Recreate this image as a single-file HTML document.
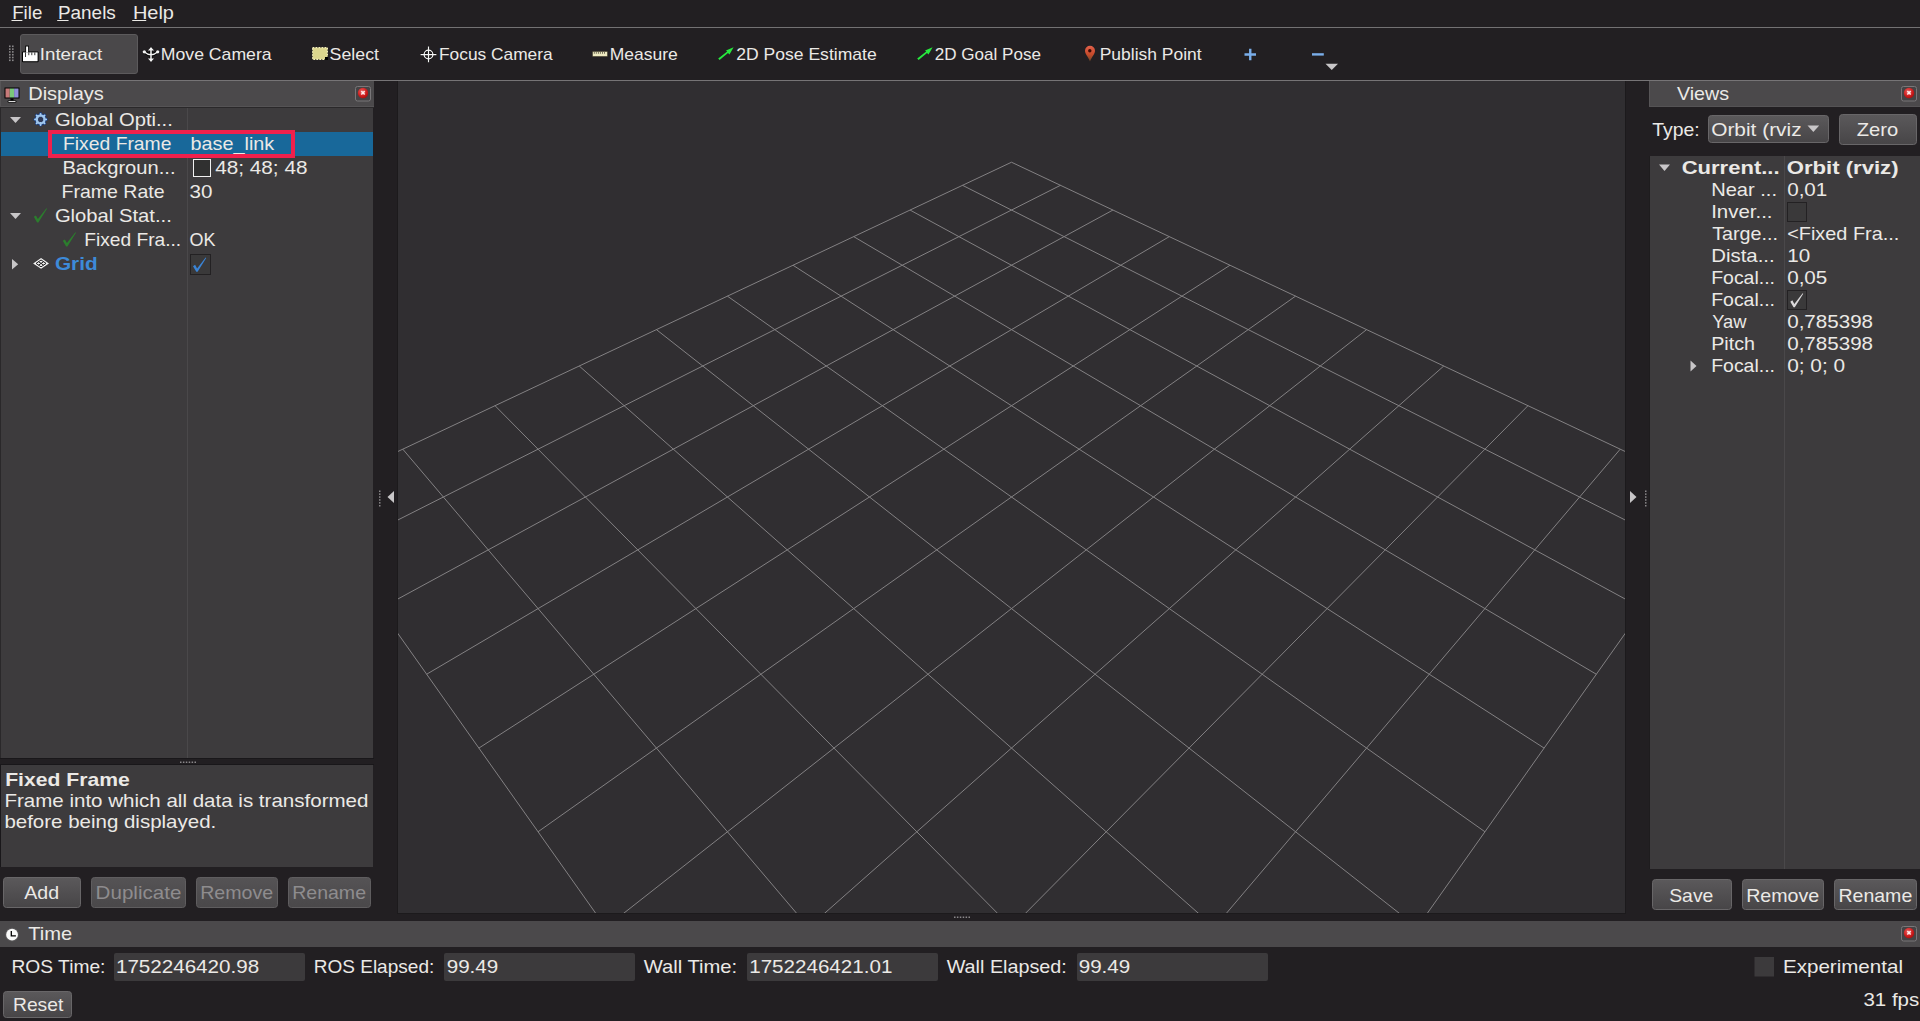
<!DOCTYPE html>
<html><head><meta charset="utf-8"><style>html,body{margin:0;padding:0;background:#221f22;overflow:hidden}svg{display:block}text{font-family:"Liberation Sans",sans-serif}</style></head>
<body><svg width="1920" height="1021" viewBox="0 0 1920 1021">
<defs><radialGradient id="redg" cx="0.4" cy="0.35" r="0.7"><stop offset="0" stop-color="#e86060"/><stop offset="0.6" stop-color="#d02020"/><stop offset="1" stop-color="#a80c0c"/></radialGradient></defs>
<rect x="0" y="0" width="1920" height="1021" fill="#221f22" />
<text x="12.20" y="19.00" font-size="19.0" fill="#ebe9e6" textLength="30.12" lengthAdjust="spacingAndGlyphs">File</text>
<text x="57.90" y="19.00" font-size="19.0" fill="#ebe9e6" textLength="57.94" lengthAdjust="spacingAndGlyphs">Panels</text>
<text x="132.90" y="19.00" font-size="19.0" fill="#ebe9e6" textLength="41.03" lengthAdjust="spacingAndGlyphs">Help</text>
<rect x="11.5" y="20" width="10.859375" height="1" fill="#ebe9e6" />
<rect x="57.2" y="20" width="11.359375" height="1" fill="#ebe9e6" />
<rect x="132.2" y="20" width="14.03125" height="1" fill="#ebe9e6" />
<rect x="0" y="27" width="1920" height="1" fill="#737173" />
<rect x="0" y="80" width="1920" height="1" fill="#767476" />
<rect x="9" y="45.5" width="1.6" height="1.6" fill="#8a888a" />
<rect x="12" y="45.5" width="1.6" height="1.6" fill="#8a888a" />
<rect x="9" y="48.3" width="1.6" height="1.6" fill="#8a888a" />
<rect x="12" y="48.3" width="1.6" height="1.6" fill="#8a888a" />
<rect x="9" y="51.1" width="1.6" height="1.6" fill="#8a888a" />
<rect x="12" y="51.1" width="1.6" height="1.6" fill="#8a888a" />
<rect x="9" y="53.9" width="1.6" height="1.6" fill="#8a888a" />
<rect x="12" y="53.9" width="1.6" height="1.6" fill="#8a888a" />
<rect x="9" y="56.7" width="1.6" height="1.6" fill="#8a888a" />
<rect x="12" y="56.7" width="1.6" height="1.6" fill="#8a888a" />
<rect x="9" y="59.5" width="1.6" height="1.6" fill="#8a888a" />
<rect x="12" y="59.5" width="1.6" height="1.6" fill="#8a888a" />
<rect x="20.5" y="34.5" width="117" height="39" rx="2.5" fill="#4a484a" stroke="#5c5a5c"/>
<text x="39.80" y="60.00" font-size="17" fill="#ebe9e6" textLength="62.45" lengthAdjust="spacingAndGlyphs">Interact</text>
<text x="160.80" y="60.00" font-size="17" fill="#ebe9e6" textLength="110.83" lengthAdjust="spacingAndGlyphs">Move Camera</text>
<text x="329.60" y="60.00" font-size="17" fill="#ebe9e6" textLength="49.38" lengthAdjust="spacingAndGlyphs">Select</text>
<text x="439.00" y="60.00" font-size="17" fill="#ebe9e6" textLength="113.62" lengthAdjust="spacingAndGlyphs">Focus Camera</text>
<text x="609.80" y="60.00" font-size="17" fill="#ebe9e6" textLength="68.03" lengthAdjust="spacingAndGlyphs">Measure</text>
<text x="736.20" y="60.00" font-size="17" fill="#ebe9e6" textLength="140.50" lengthAdjust="spacingAndGlyphs">2D Pose Estimate</text>
<text x="934.70" y="60.00" font-size="17" fill="#ebe9e6" textLength="106.25" lengthAdjust="spacingAndGlyphs">2D Goal Pose</text>
<text x="1099.70" y="60.00" font-size="17" fill="#ebe9e6" textLength="101.92" lengthAdjust="spacingAndGlyphs">Publish Point</text>

<!-- hand -->
<g>
 <rect x="25.3" y="45.6" width="3.6" height="10" fill="#000"/>
 <rect x="22" y="51.4" width="16.6" height="10.8" rx="1" fill="#000"/>
 <rect x="26.1" y="46.5" width="2" height="6" fill="#fff"/>
 <rect x="23" y="52.4" width="14.6" height="8.8" fill="#fff"/>
 <path d="M25.5 52.4 V57 M28.8 52.4 V55.2 M31.8 52.4 V55.2 M34.8 52.4 V55.2" stroke="#222" stroke-width="0.9"/>
</g>
<!-- move camera -->
<g fill="none" stroke="#000" stroke-width="3.2" stroke-linecap="round" opacity="0.9">
 <path d="M151 48.5 V60 M144.5 52 Q151 57.5 157.5 52"/>
</g>
<g fill="none" stroke="#f4f4f4" stroke-width="1.5">
 <path d="M151 48.5 V60 M144.5 52 Q151 57.5 157.5 52"/>
</g>
<g fill="#f4f4f4">
 <path d="M148 50.5 L151 47 L154 50.5 z M148 58.5 L151 62 L154 58.5 z"/>
 <circle cx="144.3" cy="51.8" r="1.6"/><circle cx="157.7" cy="51.8" r="1.6"/>
</g>
<!-- select -->
<rect x="312" y="47" width="16" height="13" fill="#201c1f"/>
<rect x="312.6" y="47.6" width="14.8" height="11.8" fill="#dcd68e" stroke="#f2eebc" stroke-width="1.2" stroke-dasharray="1.6 1.4"/>
<rect x="325" y="57" width="3" height="3" fill="#000"/>
<!-- focus -->
<g stroke="#000" fill="none" stroke-width="2.6" opacity="0.55"><circle cx="428.5" cy="54.5" r="4.4"/><path d="M428.5 46.5 V62.3 M420.6 54.5 H436.4"/></g>
<g stroke="#f6f6f6" fill="none" stroke-width="1.25"><circle cx="428.5" cy="54.5" r="4.4"/><path d="M428.5 46.5 V62.3 M420.6 54.5 H436.4"/></g>
<!-- measure ruler -->
<rect x="592" y="51" width="16" height="6" fill="#3a3428"/>
<rect x="592.8" y="51.8" width="14.4" height="4.4" fill="#ece8c0"/>
<path d="M594.3 51.8 v2 M596.3 51.8 v2 M598.4 51.8 v2 M600.4 51.8 v2 M602.5 51.8 v2 M604.5 51.8 v2" stroke="#6a6450" stroke-width="0.9"/>
<!-- pose arrows -->
<g fill="#27e83e">
 <path d="M718.2 58.6 L719.6 60 L728 53 L729.5 54.6 L733.6 47.3 L726 50.6 L727.2 51.6 z"/>
 <path d="M917.2 58.6 L918.6 60 L927 53 L928.5 54.6 L932.6 47.3 L925 50.6 L926.2 51.6 z"/>
</g>
<!-- pin -->
<defs><linearGradient id="ping" x1="0" y1="0" x2="0" y2="1"><stop offset="0" stop-color="#e2604a"/><stop offset="0.55" stop-color="#c64a2a"/><stop offset="1" stop-color="#6a4a2a"/></linearGradient></defs>
<path d="M1090 61.5 C1088.5 57 1085 54.5 1085 50.8 A5 5 0 0 1 1095 50.8 C1095 54.5 1091.5 57 1090 61.5 z" fill="url(#ping)"/>
<circle cx="1089.8" cy="50.8" r="1.7" fill="#3a0a06"/>
<!-- plus / minus -->
<path d="M1244.5 54.5 H1256 M1250.25 48.8 V60.2" stroke="#7aaeea" stroke-width="2.4"/>
<path d="M1312 54.4 H1323.8" stroke="#7aaeea" stroke-width="2.4"/>
<path d="M1325.5 63.8 L1338 63.8 L1331.75 70 z" fill="#c8c6c8"/>

<rect x="0" y="81" width="374" height="26" fill="#4b494b" />
<rect x="355.5" y="86.5" width="15" height="14.5" rx="2" fill="#454345" stroke="#797779" stroke-width="1"/>
<circle cx="363.0" cy="93.0" r="5.2" fill="url(#redg)"/>
<path d="M361.3 91.1 l3.4 3.4 M364.7 91.1 l-3.4 3.4" stroke="#ffe8e8" stroke-width="1.6"/>
<g transform="translate(4,87)">
<rect x="0.5" y="0.5" width="15" height="11" fill="#000"/>
<rect x="1.5" y="1.5" width="4.3" height="9" fill="#c77a7a"/><rect x="5.8" y="1.5" width="4.3" height="9" fill="#7ac77a"/><rect x="10.1" y="1.5" width="4.4" height="9" fill="#8f8fd8"/>
<rect x="6.5" y="11.5" width="3" height="2" fill="#000"/><rect x="3.5" y="13.5" width="9" height="2" rx="1" fill="#000"/><rect x="4.5" y="14" width="7" height="1" fill="#ddd"/>
</g>
<rect x="0" y="81" width="1" height="26" fill="#575557" />
<rect x="0" y="106" width="374" height="1" fill="#555355" />
<text x="28.20" y="100.00" font-size="19.0" fill="#ebe9e6" textLength="75.72" lengthAdjust="spacingAndGlyphs">Displays</text>
<rect x="0" y="107" width="374" height="1" fill="#2a282a" />
<rect x="1" y="108" width="372" height="650" fill="#3d3b3d" />
<rect x="0" y="108" width="1" height="650" fill="#2a282a" />
<rect x="187" y="108" width="1" height="650" fill="#4a484a" />
<rect x="1" y="132" width="372" height="24" fill="#18689a" />
<path d="M10 117 L21 117 L15.5 123 z" fill="#c8c6c8"/>
<path d="M10 213 L21 213 L15.5 219 z" fill="#c8c6c8"/>
<path d="M12 259 L18.2 264.3 L12 269.6 z" fill="#c8c6c8"/>
<g transform="translate(40.6,119.4)">
<g stroke="#1f3f7a" stroke-width="3.4" stroke-linecap="round"><path d="M0 -5.6 V5.6 M-5.6 0 H5.6 M-4 -4 L4 4 M-4 4 L4 -4"/></g>
<circle r="4.2" fill="none" stroke="#1f3f7a" stroke-width="3.6"/>
<g stroke="#a6cdf4" stroke-width="1.8" stroke-linecap="round"><path d="M0 -5.6 V5.6 M-5.6 0 H5.6 M-4 -4 L4 4 M-4 4 L4 -4"/></g>
<circle r="3.9" fill="none" stroke="#9ec6ee" stroke-width="2.2"/>
<circle r="2.6" fill="#2e3a58"/>
</g>
<path transform="translate(33.80,208.20) scale(1.000)" d="M0 8.6 L2.1 7.2 L4.1 10.9 L12.6 0 L13.2 0.5 L4.6 14.2 L3.3 14.2 z" fill="#2b7d2d"/>
<path transform="translate(62.80,232.20) scale(1.000)" d="M0 8.6 L2.1 7.2 L4.1 10.9 L12.6 0 L13.2 0.5 L4.6 14.2 L3.3 14.2 z" fill="#2b7d2d"/>
<g transform="translate(41.05,263.4)">
<path d="M-7.9 0 L0 -5.4 L7.9 0 L0 5.4 z" fill="#f4f4f4"/>
<path d="M-5.0 0 L0 -3.4 L5.0 0 L0 3.4 z M-2.5 -1.7 L2.5 1.7 M2.5 -1.7 L-2.5 1.7" fill="none" stroke="#1a181a" stroke-width="1.0"/>
</g>
<text x="54.90" y="126.00" font-size="19.0" fill="#ebe9e6" textLength="117.95" lengthAdjust="spacingAndGlyphs">Global Opti...</text>
<text x="63.00" y="150.00" font-size="19.0" fill="#ebe9e6" textLength="108.47" lengthAdjust="spacingAndGlyphs">Fixed Frame</text>
<text x="190.50" y="150.00" font-size="19.0" fill="#ebe9e6" textLength="83.73" lengthAdjust="spacingAndGlyphs">base_link</text>
<text x="62.40" y="174.00" font-size="19.0" fill="#ebe9e6" textLength="113.11" lengthAdjust="spacingAndGlyphs">Backgroun...</text>
<rect x="193.5" y="159.5" width="17" height="17" fill="#303030" stroke="#f0f0f0"/>
<text x="215.20" y="174.00" font-size="19.0" fill="#ebe9e6" textLength="92.28" lengthAdjust="spacingAndGlyphs">48; 48; 48</text>
<text x="61.50" y="198.00" font-size="19.0" fill="#ebe9e6" textLength="103.09" lengthAdjust="spacingAndGlyphs">Frame Rate</text>
<text x="189.60" y="198.00" font-size="19.0" fill="#ebe9e6" textLength="22.91" lengthAdjust="spacingAndGlyphs">30</text>
<text x="54.90" y="222.00" font-size="19.0" fill="#ebe9e6" textLength="116.88" lengthAdjust="spacingAndGlyphs">Global Stat...</text>
<text x="84.20" y="246.00" font-size="19.0" fill="#ebe9e6" textLength="97.02" lengthAdjust="spacingAndGlyphs">Fixed Fra...</text>
<text x="189.60" y="246.00" font-size="19.0" fill="#ebe9e6" textLength="25.97" lengthAdjust="spacingAndGlyphs">OK</text>
<text x="54.90" y="270.00" font-size="19.0" font-weight="bold" fill="#3d8ad8" textLength="42.72" lengthAdjust="spacingAndGlyphs">Grid</text>
<rect x="190.5" y="254.5" width="20" height="20" fill="#3a393a" stroke="#232123"/>
<path transform="translate(193.00,257.60) scale(1.000)" d="M0 8.6 L2.1 7.2 L4.1 10.9 L12.6 0 L13.2 0.5 L4.6 14.2 L3.3 14.2 z" fill="#3a84d6"/>
<rect x="50" y="132" width="243" height="24" fill="none" stroke="#f0204c" stroke-width="4"/>
<rect x="180.0" y="761.5" width="1.5" height="1.5" fill="#8a888a" />
<rect x="182.9" y="761.5" width="1.5" height="1.5" fill="#8a888a" />
<rect x="185.8" y="761.5" width="1.5" height="1.5" fill="#8a888a" />
<rect x="188.7" y="761.5" width="1.5" height="1.5" fill="#8a888a" />
<rect x="191.6" y="761.5" width="1.5" height="1.5" fill="#8a888a" />
<rect x="194.5" y="761.5" width="1.5" height="1.5" fill="#8a888a" />
<rect x="1" y="765" width="372" height="102" fill="#3d3b3d" />
<rect x="0" y="764" width="374" height="1" fill="#19171a" />
<rect x="0" y="758" width="374" height="1" fill="#19171a" />
<rect x="0" y="765" width="1" height="102" fill="#19171a" />
<text x="5.20" y="785.60" font-size="19.0" font-weight="bold" fill="#ebe9e6" textLength="124.55" lengthAdjust="spacingAndGlyphs">Fixed Frame</text>
<text x="4.40" y="806.50" font-size="19.0" fill="#ebe9e6" textLength="364.03" lengthAdjust="spacingAndGlyphs">Frame into which all data is transformed</text>
<text x="4.40" y="828.00" font-size="19.0" fill="#ebe9e6" textLength="211.84" lengthAdjust="spacingAndGlyphs">before being displayed.</text>
<defs><linearGradient id="btn" x1="0" y1="0" x2="0" y2="1"><stop offset="0" stop-color="#5b595b"/><stop offset="1" stop-color="#474547"/></linearGradient>
<linearGradient id="btnd" x1="0" y1="0" x2="0" y2="1"><stop offset="0" stop-color="#555355"/><stop offset="1" stop-color="#4a484a"/></linearGradient></defs>
<rect x="3.5" y="877.5" width="77.0" height="30.0" rx="3" fill="url(#btn)" stroke="#686668"/>
<text x="24.20" y="899.00" font-size="19.0" fill="#ebe9e6" textLength="34.84" lengthAdjust="spacingAndGlyphs">Add</text>
<rect x="91.5" y="877.5" width="94.0" height="30.0" rx="3" fill="url(#btnd)" stroke="#5f5d5f"/>
<text x="95.60" y="899.00" font-size="19.0" fill="#8e8c8e" textLength="85.75" lengthAdjust="spacingAndGlyphs">Duplicate</text>
<rect x="196.5" y="877.5" width="81.0" height="30.0" rx="3" fill="url(#btnd)" stroke="#5f5d5f"/>
<text x="200.20" y="899.00" font-size="19.0" fill="#8e8c8e" textLength="73.05" lengthAdjust="spacingAndGlyphs">Remove</text>
<rect x="288.5" y="877.5" width="82.0" height="30.0" rx="3" fill="url(#btnd)" stroke="#5f5d5f"/>
<text x="292.20" y="899.00" font-size="19.0" fill="#8e8c8e" textLength="73.81" lengthAdjust="spacingAndGlyphs">Rename</text>
<rect x="379" y="490.5" width="1.5" height="1.5" fill="#8a888a" />
<rect x="1645" y="490.5" width="1.5" height="1.5" fill="#8a888a" />
<rect x="379" y="493.4" width="1.5" height="1.5" fill="#8a888a" />
<rect x="1645" y="493.4" width="1.5" height="1.5" fill="#8a888a" />
<rect x="379" y="496.3" width="1.5" height="1.5" fill="#8a888a" />
<rect x="1645" y="496.3" width="1.5" height="1.5" fill="#8a888a" />
<rect x="379" y="499.2" width="1.5" height="1.5" fill="#8a888a" />
<rect x="1645" y="499.2" width="1.5" height="1.5" fill="#8a888a" />
<rect x="379" y="502.1" width="1.5" height="1.5" fill="#8a888a" />
<rect x="1645" y="502.1" width="1.5" height="1.5" fill="#8a888a" />
<rect x="379" y="505.0" width="1.5" height="1.5" fill="#8a888a" />
<rect x="1645" y="505.0" width="1.5" height="1.5" fill="#8a888a" />
<path d="M394 491 L387.5 497 L394 503 z" fill="#c8c6c8"/>
<path d="M1630 491 L1636.5 497 L1630 503 z" fill="#c8c6c8"/>
<rect x="397" y="81" width="1229" height="833" fill="#1c1a1c" />
<rect x="398" y="81" width="1227" height="832" fill="#302e31" />
<svg x="398" y="81" width="1227" height="832" viewBox="398 81 1227 832" overflow="hidden">
<line x1="1011.50" y1="162.23" x2="1721.66" y2="497.00" stroke="#838183" stroke-width="1"/>
<line x1="1011.50" y1="162.23" x2="301.34" y2="497.00" stroke="#838183" stroke-width="1"/>
<line x1="962.52" y1="185.32" x2="1684.28" y2="549.86" stroke="#838183" stroke-width="1"/>
<line x1="1060.48" y1="185.32" x2="338.72" y2="549.86" stroke="#838183" stroke-width="1"/>
<line x1="910.05" y1="210.05" x2="1642.75" y2="608.59" stroke="#838183" stroke-width="1"/>
<line x1="1112.95" y1="210.05" x2="380.25" y2="608.59" stroke="#838183" stroke-width="1"/>
<line x1="853.69" y1="236.62" x2="1596.33" y2="674.23" stroke="#838183" stroke-width="1"/>
<line x1="1169.31" y1="236.62" x2="426.67" y2="674.23" stroke="#838183" stroke-width="1"/>
<line x1="792.99" y1="265.24" x2="1544.12" y2="748.08" stroke="#838183" stroke-width="1"/>
<line x1="1230.01" y1="265.24" x2="478.88" y2="748.08" stroke="#838183" stroke-width="1"/>
<line x1="727.44" y1="296.14" x2="1484.94" y2="831.77" stroke="#838183" stroke-width="1"/>
<line x1="1295.56" y1="296.14" x2="538.06" y2="831.77" stroke="#838183" stroke-width="1"/>
<line x1="656.42" y1="329.61" x2="1417.30" y2="927.42" stroke="#838183" stroke-width="1"/>
<line x1="1366.58" y1="329.61" x2="605.70" y2="927.42" stroke="#838183" stroke-width="1"/>
<line x1="579.23" y1="366.00" x2="1339.26" y2="1037.78" stroke="#838183" stroke-width="1"/>
<line x1="1443.77" y1="366.00" x2="683.74" y2="1037.78" stroke="#838183" stroke-width="1"/>
<line x1="495.02" y1="405.70" x2="1248.22" y2="1166.54" stroke="#838183" stroke-width="1"/>
<line x1="1527.98" y1="405.70" x2="774.78" y2="1166.54" stroke="#838183" stroke-width="1"/>
<line x1="402.79" y1="449.18" x2="1140.62" y2="1318.71" stroke="#838183" stroke-width="1"/>
<line x1="1620.21" y1="449.18" x2="882.38" y2="1318.71" stroke="#838183" stroke-width="1"/>
<line x1="301.34" y1="497.00" x2="1011.50" y2="1501.31" stroke="#838183" stroke-width="1"/>
<line x1="1721.66" y1="497.00" x2="1011.50" y2="1501.31" stroke="#838183" stroke-width="1"/>
</svg>
<rect x="954.0" y="916.5" width="1.5" height="1.5" fill="#8a888a" />
<rect x="956.9" y="916.5" width="1.5" height="1.5" fill="#8a888a" />
<rect x="959.8" y="916.5" width="1.5" height="1.5" fill="#8a888a" />
<rect x="962.7" y="916.5" width="1.5" height="1.5" fill="#8a888a" />
<rect x="965.6" y="916.5" width="1.5" height="1.5" fill="#8a888a" />
<rect x="968.5" y="916.5" width="1.5" height="1.5" fill="#8a888a" />
<rect x="1649" y="81" width="271" height="26" fill="#4b494b" />
<rect x="1649" y="81" width="1" height="26" fill="#575557" />
<rect x="1649" y="106" width="271" height="1" fill="#555355" />
<text x="1677.00" y="100.00" font-size="19.0" fill="#ebe9e6" textLength="52.09" lengthAdjust="spacingAndGlyphs">Views</text>
<rect x="1901.5" y="86.5" width="15" height="14.5" rx="2" fill="#454345" stroke="#797779" stroke-width="1"/>
<circle cx="1909.0" cy="93.0" r="5.2" fill="url(#redg)"/>
<path d="M1907.3 91.1 l3.4 3.4 M1910.7 91.1 l-3.4 3.4" stroke="#ffe8e8" stroke-width="1.6"/>
<text x="1652.20" y="135.50" font-size="19.0" fill="#ebe9e6" textLength="47.42" lengthAdjust="spacingAndGlyphs">Type:</text>
<rect x="1708.5" y="115.5" width="120" height="27" rx="3" fill="url(#btn)" stroke="#686668"/>
<clipPath id="cbclip"><rect x="1709" y="116" width="92" height="26"/></clipPath><g clip-path="url(#cbclip)">
<text x="1711.20" y="135.50" font-size="19.0" fill="#ebe9e6" textLength="97.33" lengthAdjust="spacingAndGlyphs">Orbit (rviz)</text>
</g>
<path d="M1807.5 125.5 L1819.2 125.5 L1813.35 132 z" fill="#c8c6c8"/>
<rect x="1839.5" y="114.5" width="77.0" height="30.0" rx="3" fill="url(#btn)" stroke="#686668"/>
<text x="1856.70" y="135.50" font-size="19.0" fill="#ebe9e6" textLength="41.44" lengthAdjust="spacingAndGlyphs">Zero</text>
<rect x="1649" y="156" width="1" height="713" fill="#1e1c1e" />
<rect x="1650" y="156" width="270" height="713" fill="#3d3b3d" />
<rect x="1784" y="156" width="1" height="713" fill="#4a484a" />
<path d="M1659 164.5 L1670 164.5 L1664.5 171 z" fill="#c8c6c8"/>
<text x="1681.70" y="173.80" font-size="19.0" font-weight="bold" fill="#ebe9e6" textLength="97.92" lengthAdjust="spacingAndGlyphs">Current...</text>
<text x="1786.70" y="173.80" font-size="19.0" font-weight="bold" fill="#ebe9e6" textLength="111.84" lengthAdjust="spacingAndGlyphs">Orbit (rviz)</text>
<text x="1711.20" y="195.60" font-size="19.0" fill="#ebe9e6" textLength="65.86" lengthAdjust="spacingAndGlyphs">Near ...</text>
<text x="1787.20" y="195.60" font-size="19.0" fill="#ebe9e6" textLength="40.08" lengthAdjust="spacingAndGlyphs">0,01</text>
<text x="1711.20" y="217.60" font-size="19.0" fill="#ebe9e6" textLength="61.36" lengthAdjust="spacingAndGlyphs">Inver...</text>
<text x="1712.20" y="239.60" font-size="19.0" fill="#ebe9e6" textLength="65.80" lengthAdjust="spacingAndGlyphs">Targe...</text>
<text x="1787.20" y="239.60" font-size="19.0" fill="#ebe9e6" textLength="112.09" lengthAdjust="spacingAndGlyphs">&lt;Fixed Fra...</text>
<text x="1711.20" y="261.60" font-size="19.0" fill="#ebe9e6" textLength="63.48" lengthAdjust="spacingAndGlyphs">Dista...</text>
<text x="1787.20" y="261.60" font-size="19.0" fill="#ebe9e6" textLength="22.91" lengthAdjust="spacingAndGlyphs">10</text>
<text x="1711.20" y="283.60" font-size="19.0" fill="#ebe9e6" textLength="63.81" lengthAdjust="spacingAndGlyphs">Focal...</text>
<text x="1787.20" y="283.60" font-size="19.0" fill="#ebe9e6" textLength="40.08" lengthAdjust="spacingAndGlyphs">0,05</text>
<text x="1711.20" y="305.60" font-size="19.0" fill="#ebe9e6" textLength="63.81" lengthAdjust="spacingAndGlyphs">Focal...</text>
<text x="1712.20" y="327.60" font-size="19.0" fill="#ebe9e6" textLength="34.27" lengthAdjust="spacingAndGlyphs">Yaw</text>
<text x="1787.20" y="327.60" font-size="19.0" fill="#ebe9e6" textLength="85.89" lengthAdjust="spacingAndGlyphs">0,785398</text>
<text x="1711.20" y="349.60" font-size="19.0" fill="#ebe9e6" textLength="43.83" lengthAdjust="spacingAndGlyphs">Pitch</text>
<text x="1787.20" y="349.60" font-size="19.0" fill="#ebe9e6" textLength="85.89" lengthAdjust="spacingAndGlyphs">0,785398</text>
<text x="1711.20" y="371.60" font-size="19.0" fill="#ebe9e6" textLength="63.81" lengthAdjust="spacingAndGlyphs">Focal...</text>
<text x="1787.20" y="371.60" font-size="19.0" fill="#ebe9e6" textLength="57.92" lengthAdjust="spacingAndGlyphs">0; 0; 0</text>
<rect x="1787.5" y="202.5" width="19" height="19" fill="#3a393a" stroke="#232123"/>
<rect x="1787.5" y="290.5" width="19" height="19" fill="#3a393a" stroke="#232123"/>
<path transform="translate(1790.30,293.30) scale(0.980)" d="M0 8.6 L2.1 7.2 L4.1 10.9 L12.6 0 L13.2 0.5 L4.6 14.2 L3.3 14.2 z" fill="#dad8da"/>
<path d="M1690.5 360.5 L1696.5 366 L1690.5 371.5 z" fill="#c8c6c8"/>
<rect x="1652.5" y="879.5" width="79.0" height="30.0" rx="3" fill="url(#btn)" stroke="#686668"/>
<text x="1669.20" y="901.50" font-size="19.0" fill="#ebe9e6" textLength="44.19" lengthAdjust="spacingAndGlyphs">Save</text>
<rect x="1742.5" y="879.5" width="81.0" height="30.0" rx="3" fill="url(#btn)" stroke="#686668"/>
<text x="1746.20" y="901.50" font-size="19.0" fill="#ebe9e6" textLength="73.05" lengthAdjust="spacingAndGlyphs">Remove</text>
<rect x="1834.5" y="879.5" width="82.0" height="30.0" rx="3" fill="url(#btn)" stroke="#686668"/>
<text x="1838.45" y="901.50" font-size="19.0" fill="#ebe9e6" textLength="73.81" lengthAdjust="spacingAndGlyphs">Rename</text>
<rect x="0" y="921" width="1920" height="26" fill="#4b494b" />
<circle cx="12.05" cy="934.7" r="6.9" fill="#5a585a"/><circle cx="12.05" cy="934.7" r="5.9" fill="#fafafa"/><path d="M11.3 931 V935.8 H15.9" stroke="#000" stroke-width="1.3" fill="none"/>
<text x="28.20" y="940.20" font-size="19.0" fill="#ebe9e6" textLength="44.06" lengthAdjust="spacingAndGlyphs">Time</text>
<rect x="1901.5" y="926.5" width="15" height="14.5" rx="2" fill="#454345" stroke="#797779" stroke-width="1"/>
<circle cx="1909.0" cy="933.0" r="5.2" fill="url(#redg)"/>
<path d="M1907.3 931.1 l3.4 3.4 M1910.7 931.1 l-3.4 3.4" stroke="#ffe8e8" stroke-width="1.6"/>
<text x="11.50" y="973.00" font-size="19.0" fill="#ebe9e6" textLength="93.94" lengthAdjust="spacingAndGlyphs">ROS Time:</text>
<rect x="114.0" y="953" width="191.0" height="28" rx="2" fill="#3c3a3c"/>
<text x="115.95" y="973.00" font-size="19.0" fill="#ebe9e6" textLength="143.16" lengthAdjust="spacingAndGlyphs">1752246420.98</text>
<text x="313.70" y="973.00" font-size="19.0" fill="#ebe9e6" textLength="120.58" lengthAdjust="spacingAndGlyphs">ROS Elapsed:</text>
<rect x="444.0" y="953" width="191.0" height="28" rx="2" fill="#3c3a3c"/>
<text x="446.70" y="973.00" font-size="19.0" fill="#ebe9e6" textLength="51.53" lengthAdjust="spacingAndGlyphs">99.49</text>
<text x="643.70" y="973.00" font-size="19.0" fill="#ebe9e6" textLength="93.52" lengthAdjust="spacingAndGlyphs">Wall Time:</text>
<rect x="747.0" y="953" width="191.0" height="28" rx="2" fill="#3c3a3c"/>
<text x="749.20" y="973.00" font-size="19.0" fill="#ebe9e6" textLength="143.16" lengthAdjust="spacingAndGlyphs">1752246421.01</text>
<text x="946.70" y="973.00" font-size="19.0" fill="#ebe9e6" textLength="120.16" lengthAdjust="spacingAndGlyphs">Wall Elapsed:</text>
<rect x="1077.0" y="953" width="191.0" height="28" rx="2" fill="#3c3a3c"/>
<text x="1078.70" y="973.00" font-size="19.0" fill="#ebe9e6" textLength="51.53" lengthAdjust="spacingAndGlyphs">99.49</text>
<rect x="1754.5" y="957" width="19.5" height="19.5" fill="#3c3a3c"/>
<text x="1782.95" y="973.00" font-size="19.0" fill="#ebe9e6" textLength="120.05" lengthAdjust="spacingAndGlyphs">Experimental</text>
<text x="1863.45" y="1006.25" font-size="19.0" fill="#ebe9e6" textLength="55.77" lengthAdjust="spacingAndGlyphs">31 fps</text>
<rect x="3.5" y="991.5" width="68.0" height="26.0" rx="3" fill="url(#btn)" stroke="#686668"/>
<text x="13.00" y="1010.90" font-size="19.0" fill="#ebe9e6" textLength="50.28" lengthAdjust="spacingAndGlyphs">Reset</text>
</svg></body></html>
